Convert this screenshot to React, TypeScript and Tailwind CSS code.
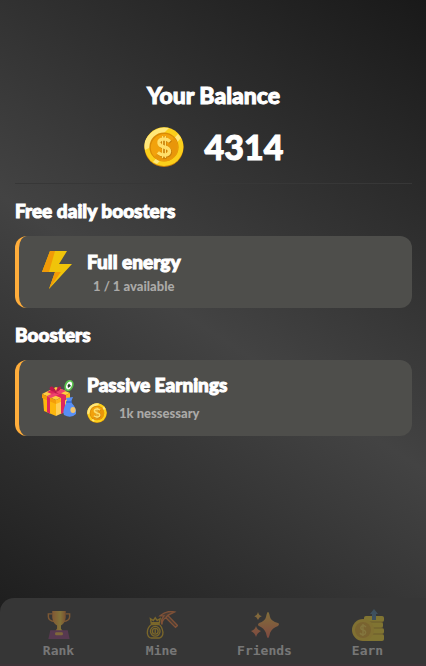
import React from 'react';

function Coin({ className }: { className: string }) {
  return (
    <svg viewBox="0 0 40 40" className={className} aria-hidden="true">
      <circle cx="20" cy="20.5" r="19.5" fill="#c97c06" />
      <circle cx="20" cy="19.7" r="19.4" fill="#fbcf1b" />
      <path d="M4 9 Q10 1 20 .5 L25 1 L5 21 L1 23 Q-1 15 4 9ZM9 35 L34 7 L37 11 L13 37Z" fill="#ffe77a" />
      <circle cx="20" cy="20" r="14.6" fill="#d98a05" />
      <circle cx="20.4" cy="20.6" r="13.6" fill="#f2a20c" />
      <path d="M10 30 L30 11 Q37 20 31 29 Q22 38 10 30Z" fill="#e8960a" />
      <path d="M26 14.5 Q23 11.5 19.5 12 Q14.500 12.500 15 16 Q15.500 19 20 20 Q25.500 21 25.500 24.500 Q25 28 20.500 28 Q16.500 28 13.800 25.500 M20 9V31" fill="none" stroke="#c57b08" strokeWidth="3.600" transform="translate(.8 .8)" />
      <path d="M26 14.5 Q23 11.5 19.5 12 Q14.500 12.500 15 16 Q15.500 19 20 20 Q25.500 21 25.500 24.500 Q25 28 20.500 28 Q16.500 28 13.800 25.500" fill="none" stroke="#ffdf6b" strokeWidth="3.400" />
      <path d="M18.600 9V31M21.400 9V31" stroke="#ffdf6b" strokeWidth="1.200" />
    </svg>
  );
}

function Bolt() {
  return (
    <svg viewBox="0 0 30 38" className="h-[38px] w-[30px]" aria-hidden="true">
      <path d="M8 0H25L17 13H30L7 38L13 21H0Z" fill="#f0c40a" />
      <path d="M8 0H13L7 21H0ZM13 21H19L7 38Z" fill="#f19a07" />
    </svg>
  );
}

function Gift() {
  return (
    <svg viewBox="0 0 34 38" className="h-[38px] w-[34px]" aria-hidden="true">
      <path d="M22 12L26 5" stroke="#52b947" strokeWidth="1.500" />
      <ellipse cx="27" cy="5.500" rx="3.500" ry="5" fill="#fff" stroke="#59c34c" strokeWidth="1.700" transform="rotate(24 27 5.500)" />
      <path d="M27 3.500L29 6L26 8L25.500 5.500Z" fill="#29452b" />
      <path d="M1 18L14 23V36L2 31Z" fill="#fdb70d" />
      <path d="M14 23L27 18V30L14 36Z" fill="#ffcf55" />
      <path d="M0 14L14 7L28 13L14 20Z" fill="#ffcc42" />
      <path d="M0 14L14 20V24L0 18Z" fill="#f49d0b" />
      <path d="M14 20L28 13V18L14 24Z" fill="#ffb51b" />
      <path d="M5 12L9 10L24 15V20L19 22V18ZM8 18V34L5 32V16ZM19 22L23 20V32L19 34Z" fill="#df275d" />
      <path d="M24 11L20 9L5 16L9 18Z" fill="#ee426e" />
      <path d="M13 12Q6 11 8 7Q11 5 14 11Q16 5 19 7Q20 10 14 12L17 14L12 13L9 15Z" fill="#bc174b" />
      <path d="M25 21L24 18L31 17L29 22Q35 28 34 34Q29 39 22 35Q20 31 25 21Z" fill="#588ff4" />
      <path d="M24 22L30 22" stroke="#356bd6" strokeWidth="1.500" />
      <ellipse cx="31" cy="30" rx="2.600" ry="3" fill="#f3c56d" />
    </svg>
  );
}

function Trophy() {
  return (
    <svg viewBox="0 0 24 29" className="h-7 w-6" aria-hidden="true">
      <defs>
        <linearGradient id="cup"><stop stopColor="#f18a32" /><stop offset=".6" stopColor="#f7cf3d" /><stop offset="1" stopColor="#dd772a" /></linearGradient>
      </defs>
      <path d="M5 3H1V6Q1 10 7 11M19 3H23V6Q23 10 17 11" fill="none" stroke="#e58b32" strokeWidth="1.500" />
      <path d="M5 0H19V7Q18 13 14 15V18L16 21H8L10 18V15Q6 13 5 7Z" fill="url(#cup)" />
      <path d="M3 20H21L23 29H1Z" fill="#893f78" />
      <rect x="8" y="22" width="8" height="3" rx="1" fill="#edb441" />
    </svg>
  );
}

function MoneyPick() {
  return (
    <svg viewBox="0 0 32 29" className="h-7 w-8" fill="none" strokeWidth="1.400" aria-hidden="true">
      <g stroke="#e3b019">
        <path d="M5 14Q0 18 1 24Q2 28 5 28H13Q17 27 17 22Q16 16 13 14ZM5 13L4 8L7 10L9 7L11 10L14 8L13 13ZM4 12H14" />
        <circle cx="9" cy="21" r="5" /><circle cx="9" cy="21" r="3" /><path d="M9 19V23" />
      </g>
      <path d="M14 5Q21 -1 29 1L22 4.500L20 7Q16 9 16 14Q14 10 18 5ZM20 7L30 17L32 15L22 4.500" fill="#ef7b38" fillOpacity=".3" stroke="#ef7b38" />
    </svg>
  );
}

function Sparkles() {
  return (
    <svg viewBox="0 0 28 26" className="h-[26px] w-7" aria-hidden="true">
      <defs>
        <linearGradient id="spark" x2="0" y2="1"><stop stopColor="#f3c142" /><stop offset="1" stopColor="#ec6850" /></linearGradient>
      </defs>
      <path d="M17 0Q18 0 19 5Q20 9 27 11Q29 12 27 14Q21 16 19 21Q18 26 17 26Q16 26 15 21Q13 16 8 14Q6 13 8 11Q14 9 15 5Q16 0 17 0ZM7 0Q8 4 11 4Q8 5 7 8Q6 5 3 4Q6 4 7 0ZM5 14Q6 18 10 19Q6 21 5 25Q4 21 0 19Q4 18 5 14Z" fill="url(#spark)" />
    </svg>
  );
}

function CoinStack() {
  return (
    <svg viewBox="0 0 32 32" className="size-8" aria-hidden="true">
      <g fill="#f0d22d"><rect x="12" y="7" width="20" height="6" rx="2" /><rect x="15" y="13" width="16" height="6" rx="2" /><rect x="15" y="19" width="17" height="6" rx="2" /><rect x="10" y="25" width="22" height="7" rx="2" /></g>
      <path d="M15 13H31M18 19H31M18 25H31" stroke="#b89121" />
      <circle cx="11" cy="21" r="11" fill="#f0c72d" />
      <circle cx="11" cy="21" r="8" fill="#dda628" />
      <path d="M14 18Q11 15 9 18Q8 20 11 21Q15 22 13 25Q10 27 8 24M11 15V27" fill="none" stroke="#f7d64b" strokeWidth="1.400" />
      <path d="M22 0L26 5H24V11H20V5H18Z" fill="#4a779a" />
    </svg>
  );
}

const tabs = [
  { name: 'Rank', icon: <Trophy /> },
  { name: 'Mine', icon: <MoneyPick /> },
  { name: 'Friends', icon: <Sparkles /> },
  { name: 'Earn', icon: <CoinStack /> },
];

const card = 'flex w-full items-center rounded-xl border-l-4 border-[#ffad3b] bg-[#4e4e4b] pl-[23px] text-left';
const heavy = '[-webkit-text-stroke:1px_currentColor]';

export default function App() {
  return (
    <div className="flex min-h-screen flex-col bg-[linear-gradient(213deg,#191919,#434343_50%,#191919)] font-['Lato_Black','Lato',sans-serif] font-black text-white">
      <main className="flex-1 pr-[14px] pl-[15px] pt-20">
        <header className="flex flex-col items-center border-b border-[#373737] pb-4">
          <h1 className={`text-[23px] leading-[30px] ${heavy}`}>Your Balance</h1>
          <div className="mt-[17px] flex items-center gap-[21px]">
            <Coin className="size-10" />
            <span className={`text-[34px] leading-10 ${heavy}`}>4314</span>
          </div>
        </header>
        <section>
          <h2 className={`mt-3 text-[19px] leading-[30px] ${heavy}`}>Free daily boosters</h2>
          <button className={`${card} mt-[10px] h-[72px]`}>
            <span className="flex w-[45px] pb-1"><Bolt /></span>
            <span className="pt-[2px]">
              <span className={`block text-[19px] leading-[26px] ${heavy}`}>Full energy</span>
              <span className="block pl-[6px] text-[13px] leading-[22px] text-[#aaa9a7]">1 / 1 available</span>
            </span>
          </button>
        </section>
        <section>
          <h2 className={`mt-3 text-[19px] leading-[30px] ${heavy}`}>Boosters</h2>
          <button className={`${card} mt-[10px] h-[76px]`}>
            <span className="w-[45px] pt-[2px]"><Gift /></span>
            <span className="pt-[2px]">
              <span className={`block text-[19px] leading-7 ${heavy}`}>Passive Earnings</span>
              <span className="flex items-center gap-3 text-[13px] leading-7 text-[#aaa9a7]"><Coin className="size-5" />1k nessessary</span>
            </span>
          </button>
        </section>
      </main>
      <nav className="flex h-[68px] justify-around rounded-tl-[14px] border-b-2 border-[#3c3438] bg-[#363636] px-[7px] pt-[9px] font-['DejaVu_Sans_Mono',monospace]">
        {tabs.map((tab) => (
          <button key={tab.name} className="flex flex-1 flex-col items-center text-[13px] leading-[18px] font-bold text-[#d8d8d8] opacity-40">
            <span className="flex h-[35px] items-center">{tab.icon}</span>
            {tab.name}
          </button>
        ))}
      </nav>
    </div>
  );
}
